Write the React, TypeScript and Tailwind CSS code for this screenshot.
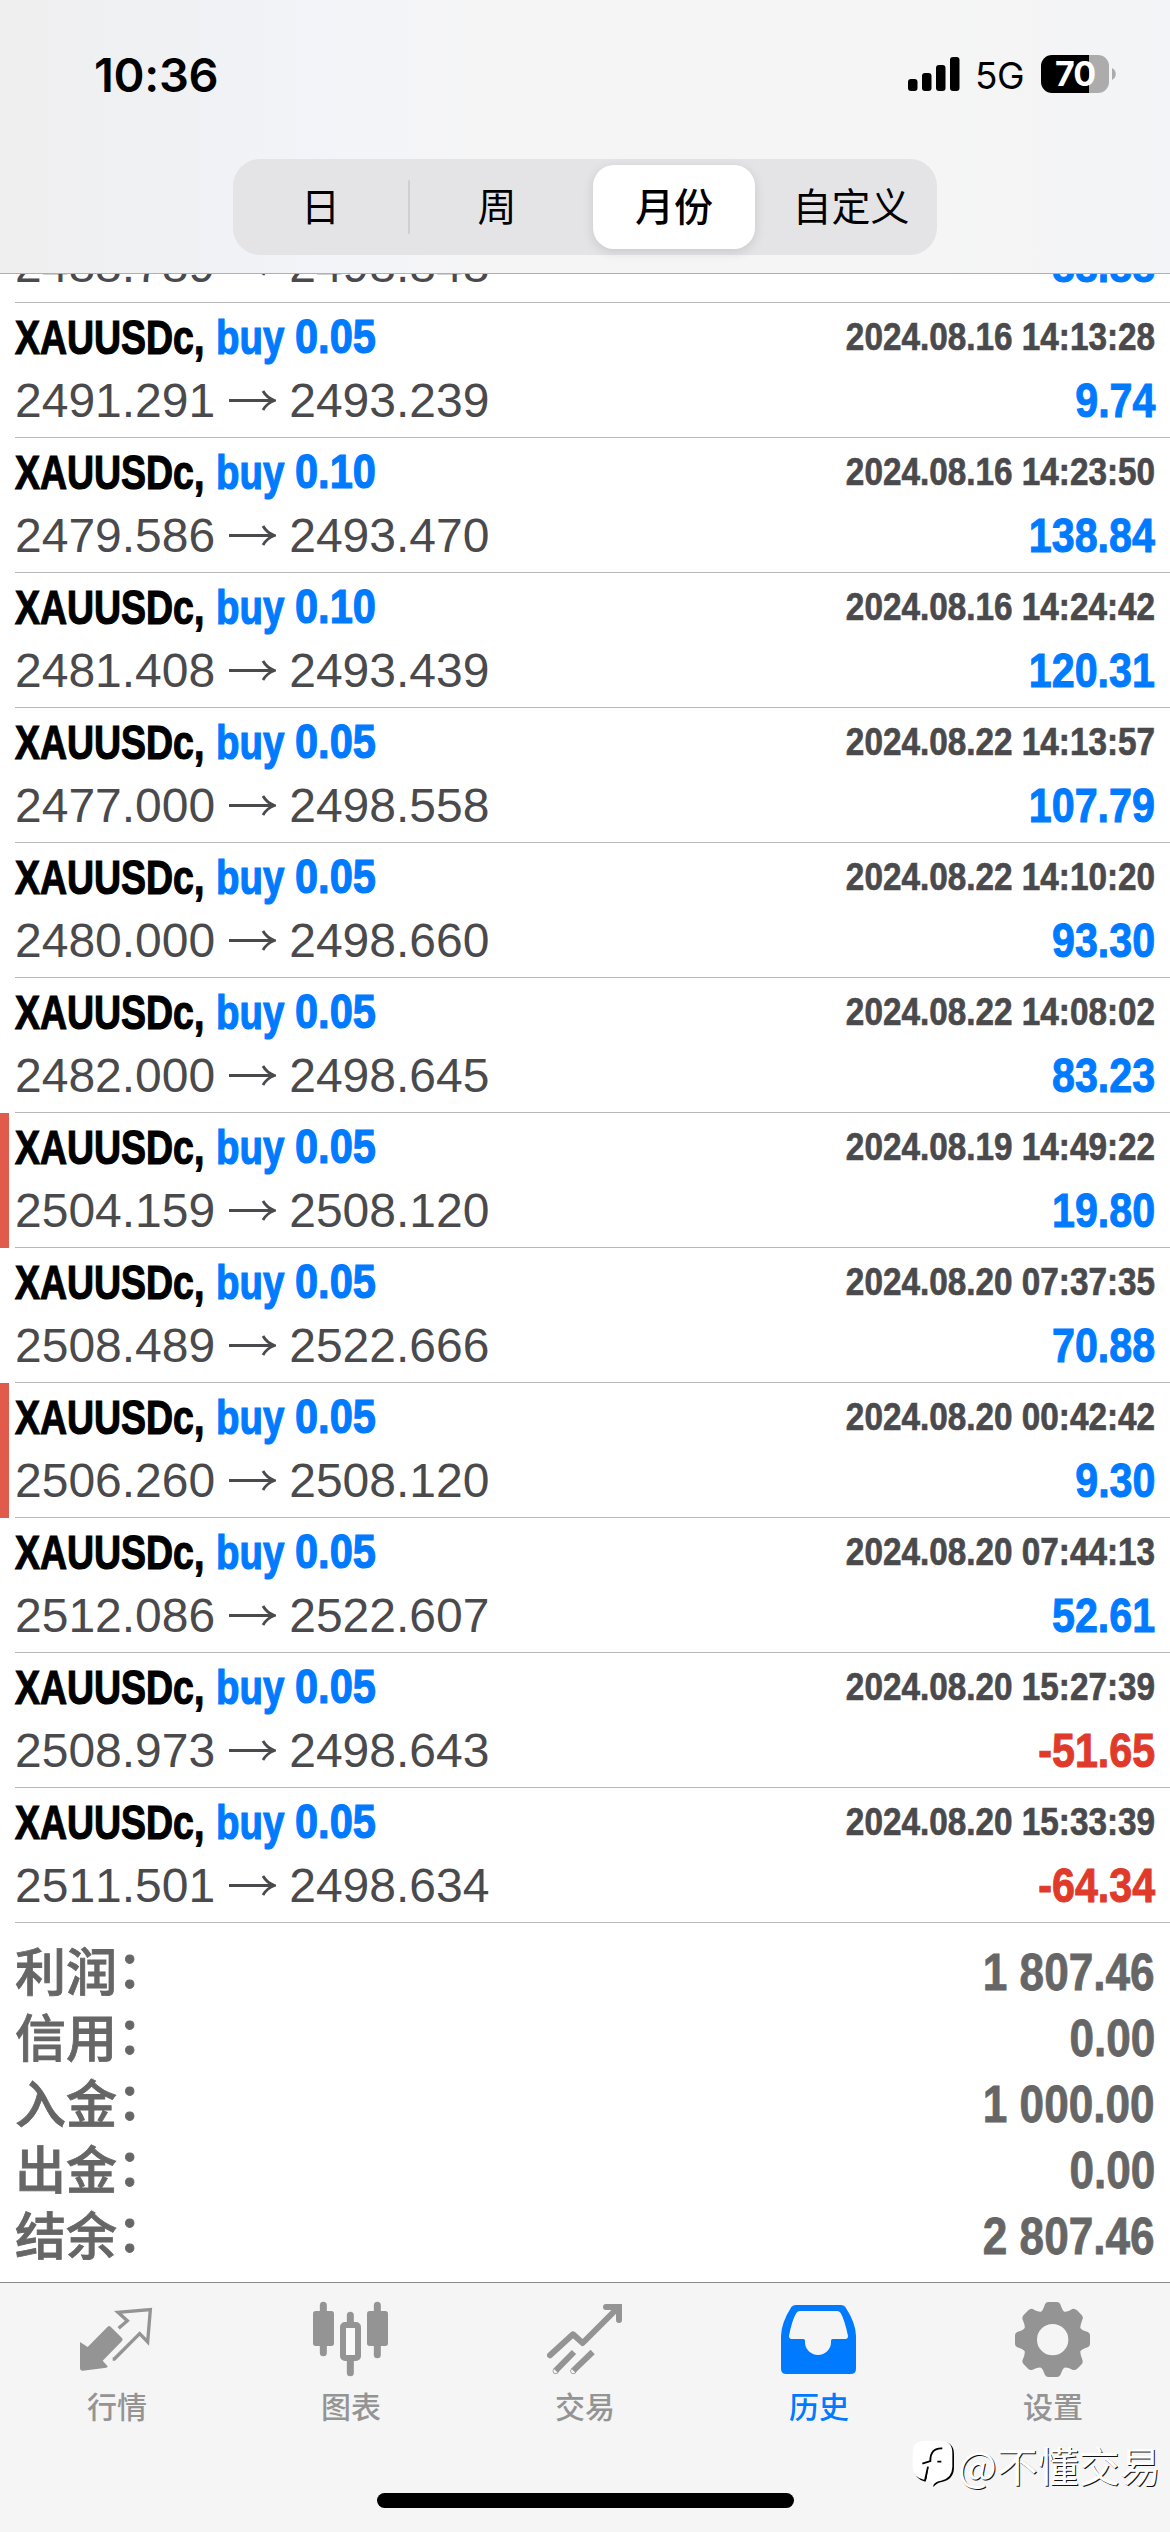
import type { ReactNode } from "react";

type Deal = {
  lots: string;
  open: string;
  close: string;
  time: string;
  profit: string;
  marked?: boolean;
};

const deals: Deal[] = [
  { lots: "0.05", open: "2491.291", close: "2493.239", time: "2024.08.16 14:13:28", profit: "9.74" },
  { lots: "0.10", open: "2479.586", close: "2493.470", time: "2024.08.16 14:23:50", profit: "138.84" },
  { lots: "0.10", open: "2481.408", close: "2493.439", time: "2024.08.16 14:24:42", profit: "120.31" },
  { lots: "0.05", open: "2477.000", close: "2498.558", time: "2024.08.22 14:13:57", profit: "107.79" },
  { lots: "0.05", open: "2480.000", close: "2498.660", time: "2024.08.22 14:10:20", profit: "93.30" },
  { lots: "0.05", open: "2482.000", close: "2498.645", time: "2024.08.22 14:08:02", profit: "83.23" },
  { lots: "0.05", open: "2504.159", close: "2508.120", time: "2024.08.19 14:49:22", profit: "19.80", marked: true },
  { lots: "0.05", open: "2508.489", close: "2522.666", time: "2024.08.20 07:37:35", profit: "70.88" },
  { lots: "0.05", open: "2506.260", close: "2508.120", time: "2024.08.20 00:42:42", profit: "9.30", marked: true },
  { lots: "0.05", open: "2512.086", close: "2522.607", time: "2024.08.20 07:44:13", profit: "52.61" },
  { lots: "0.05", open: "2508.973", close: "2498.643", time: "2024.08.20 15:27:39", profit: "-51.65" },
  { lots: "0.05", open: "2511.501", close: "2498.634", time: "2024.08.20 15:33:39", profit: "-64.34" },
];

const totals = [
  { label: "利润", value: "1 807.46" },
  { label: "信用", value: "0.00" },
  { label: "入金", value: "1 000.00" },
  { label: "出金", value: "0.00" },
  { label: "结余", value: "2 807.46" },
];

function StatusBar() {
  return (
    <div className="flex h-[159px] items-start justify-between pl-[94px] pr-[54px]">
      <span className="mt-[47px] font-['Inter'] text-[47px] font-semibold leading-[56px] tracking-[-0.3px]">
        10:36
      </span>
      <div className="mt-[55px] flex h-[38px] items-center">
        <svg className="h-[34px] w-[52px]" viewBox="0 0 52 34">
          <rect x="0" y="22" width="9.5" height="12" rx="3" />
          <rect x="14" y="16" width="9.5" height="18" rx="3" />
          <rect x="28" y="8" width="9.5" height="26" rx="3" />
          <rect x="42" y="0" width="9.5" height="34" rx="3" />
        </svg>
        <span className="ml-[15px] mt-[3px] w-[50px] font-['Inter'] text-[37px] leading-[38px] tracking-[-0.5px]">
          5G
        </span>
        <div className="ml-[16px] flex h-[38px] w-[68px] items-center justify-center rounded-[11px] bg-[linear-gradient(90deg,#000_70%,#acacac_70%)]">
          <span className="font-['Inter'] text-[34px] font-bold leading-[38px] tracking-[-1px] text-white">70</span>
        </div>
        <svg className="ml-[3px] h-[12px] w-[4px]" viewBox="0 0 4 12">
          <path d="M0 0C5 2.5 5 9.5 0 12Z" fill="#acacac" />
        </svg>
      </div>
    </div>
  );
}

function PeriodTabs() {
  return (
    <div className="mx-auto flex h-[96px] w-[704px] items-center rounded-[27px] bg-[#e4e4e7] text-[39px] leading-[56px]">
      <div className="w-[175px] text-center">日</div>
      <div className="h-[54px] w-[2px] rounded-full bg-[#cfcfd2]" />
      <div className="w-[174px] text-center">周</div>
      <div className="ml-[9px] h-[84px] w-[162px] rounded-[21px] bg-white pt-[14px] text-center font-medium shadow-[0_3px_12px_rgba(0,0,0,0.12)]">
        月份
      </div>
      <div className="ml-[10px] w-[172px] text-center">自定义</div>
    </div>
  );
}

/** Bold Helvetica squeezed to a condensed cut. */
function Condensed({ className, children }: { className: string; children: ReactNode }) {
  return (
    <span className={`inline-block whitespace-pre font-['Liberation_Sans'] font-bold [font-kerning:none] ${className}`}>
      {children}
    </span>
  );
}

function Arrow() {
  return (
    <svg className="ml-[14px] mr-[13px] h-[22px] w-[47px]" viewBox="0 0 47 22" fill="none">
      <path d="M0 10.5H45M34 1C36.5 5.5 40 8.5 45.5 10.5C40 12.5 36.5 15.5 34 20" stroke="#4a4a4d" strokeWidth="2.8" />
    </svg>
  );
}

function DealRow({ deal }: { deal: Deal }) {
  return (
    <div className="flex h-[135px] shrink-0">
      <div className={`w-[9px] ${deal.marked ? "bg-[#e05b4c]" : ""}`} />
      <div className="ml-[6px] flex flex-1 flex-col border-b border-[#b9b9bc] pr-[15px]">
        <div className="flex h-[70px] justify-between pt-[6px]">
          <div className="flex text-[48px] leading-[56px] [-webkit-text-stroke:1.2px_currentColor]">
            <div className="w-[201px]">
              <Condensed className="origin-left scale-x-[0.78] text-black">XAUUSDc,</Condensed>
            </div>
            <div className="w-[79px]">
              <Condensed className="origin-left scale-x-[0.8] text-[#007aff]">buy</Condensed>
            </div>
            <Condensed className="origin-left scale-x-[0.865] text-[#007aff]">{deal.lots}</Condensed>
          </div>
          <Condensed className="origin-right scale-x-[0.854] text-[39px] leading-[55px] text-[#4a4a4d] [-webkit-text-stroke:0.7px_currentColor]">
            {deal.time}
          </Condensed>
        </div>
        <div className="flex h-[56px] justify-between leading-[56px]">
          <div className="flex items-center font-['Liberation_Sans'] text-[48px] text-[#4a4a4d] [font-kerning:none]">
            <span>{deal.open}</span>
            <Arrow />
            <span>{deal.close}</span>
          </div>
          <Condensed
            className={`origin-right scale-x-[0.858] text-[48px] [-webkit-text-stroke:1px_currentColor] ${
              deal.profit.startsWith("-") ? "text-[#e03a2a]" : "text-[#007aff]"
            }`}
          >
            {deal.profit}
          </Condensed>
        </div>
      </div>
    </div>
  );
}

function Totals() {
  return (
    <div className="pl-[15px] pr-[15px] pt-[17px] text-[51px] text-[#666]">
      {totals.map((t) => (
        <div key={t.label} className="flex h-[66px] items-center justify-between leading-[66px]">
          <span className="font-medium [-webkit-text-stroke:0.8px_currentColor]">
            {t.label}
            <span className="inline-block -translate-y-[3px]">：</span>
          </span>
          <Condensed className="origin-right scale-x-[0.865] [-webkit-text-stroke:0.8px_currentColor]">
            {t.value}
          </Condensed>
        </div>
      ))}
    </div>
  );
}

const tabs = [
  {
    label: "行情",
    viewBox: "117 93 228 228",
    icon: (
      <>
        <path
          d="M120 216L143 231L203 170Q207 166 212 170L246 204Q250 209 246 213L188 272L203 289Q203 292 199 293L128 302Q120 302 120 294Z"
          fill="currentColor"
        />
        <path d="M236 175L262 152L234 127L331 119L323 216L299 191L223 267H218" fill="none" stroke="currentColor" strokeWidth="10" />
      </>
    ),
  },
  {
    label: "图表",
    viewBox: "819 93 228 228",
    icon: (
      <>
        <path
          d="M850 106V248M1012 106V254M931 136V165M931 265V308"
          stroke="currentColor"
          strokeWidth="21"
          strokeLinecap="round"
        />
        <rect x="819" y="123" width="63" height="105" rx="8" fill="currentColor" />
        <rect x="981" y="123" width="63" height="105" rx="8" fill="currentColor" />
        <rect x="909" y="165" width="45" height="99" rx="6" fill="#f9f9f9" stroke="currentColor" strokeWidth="18" />
      </>
    ),
  },
  {
    label: "交易",
    viewBox: "141 93 228 228",
    icon: (
      <g fill="none" stroke="currentColor" strokeWidth="18">
        <path d="M150 256L219 193L248 219L354 113" strokeLinecap="round" strokeLinejoin="round" />
        <path d="M318 111H357V150" strokeLinecap="round" />
        <path d="M222 246L167 302M278 246L220 302" />
        <circle cx="167" cy="303" r="1" strokeWidth="16" />
        <circle cx="220" cy="303" r="1" strokeWidth="16" />
      </g>
    ),
  },
  {
    label: "历史",
    viewBox: "843 93 228 228",
    active: true,
    icon: (
      <>
        <path
          d="M888 105H1023Q1031 105 1036 111Q1068 160 1068 198V296Q1068 312 1052 312H859Q843 312 843 296V198Q843 160 874 111Q879 105 888 105Z"
          fill="currentColor"
        />
        <path
          d="M900 123H1011Q1018 123 1022 129Q1034 150 1044 198Q1044 207 1036 207H998Q993 207 993 212V217A39 38 0 0 1 915 217V212Q915 207 910 207H875Q867 207 867 198Q876 150 889 129Q893 123 900 123Z"
          fill="#f5f5f5"
        />
      </>
    ),
  },
  {
    label: "设置",
    viewBox: "405 93 228 228",
    icon: (
      <path
        fillRule="evenodd"
        fill="currentColor"
        d="M505 96H531Q538 96 541 103Q548 124 553 125Q562 127 577 117Q584 115 591 121L605 135Q611 142 607 149Q600 168 601 174Q605 181 623 186Q630 189 630 196V222Q630 229 623 232Q605 238 601 244Q600 252 607 269Q610 277 605 283L591 297Q584 302 577 299Q562 291 553 293Q548 296 541 315Q538 321 531 321H505Q498 321 495 315Q488 296 483 293Q475 291 458 299Q451 302 445 297L431 283Q425 277 428 269Q436 252 434 244Q430 238 412 232Q405 229 405 222V196Q405 189 412 186Q430 181 434 174Q436 168 428 149Q425 142 431 135L445 121Q451 115 458 117Q475 127 483 125Q488 124 495 103Q498 96 505 96ZM518 162A47 47 0 1 0 518 256A47 47 0 1 0 518 162Z"
      />
    ),
  },
];

function TabBar() {
  return (
    <div className="relative h-[250px] border-t border-[#8a8a8a] bg-[#f5f5f5] pt-[18px]">
      <div className="flex">
        {tabs.map((t) => (
          <div
            key={t.label}
            className={`flex w-[234px] flex-col items-center ${t.active ? "text-[#007aff]" : "text-[#949494]"}`}
          >
            <svg className="h-[76px] w-[76px]" viewBox={t.viewBox}>
              {t.icon}
            </svg>
            <span className="mt-[9px] text-[30px] font-medium leading-[42px]">{t.label}</span>
          </div>
        ))}
      </div>
      <div className="absolute bottom-[24px] left-[377px] h-[15px] w-[417px] rounded-full bg-black" />
      {/* author tag over the bar */}
      <div className="absolute left-[912px] top-[156px] flex items-center">
        <svg className="mr-[3px] h-[50px] w-[43px]" viewBox="33 46 129 150">
          <path
            d="M75 54H122Q159 54 159 92V132Q158 168 122 175Q109 176 97 190V175L90 140L73 174Q40 166 38 132V92Q38 54 75 54Z"
            fill="#000"
          />
          <path
            d="M72 51H118Q154 51 154 88V130Q153 164 120 171Q104 172 95 186L94 172L84 130L71 169Q36 162 35 130V88Q35 51 72 51Z"
            fill="#fff"
          />
          <path d="M82 130L94 128L98 182L92 176L76 170Z" fill="#fff" />
          <path d="M124 74Q88 72 88 112L64 120M81 129L72 170M109 114H121" fill="none" stroke="#000" strokeWidth="5.5" />
        </svg>
        <span className="whitespace-nowrap font-['Noto_Sans_CJK_SC'] text-[41px] leading-[50px] text-white [text-shadow:1px_1px_0_#111]">
          @不懂交易
        </span>
      </div>
    </div>
  );
}

export default function App() {
  return (
    <div className="flex h-[2532px] w-[1170px] flex-col overflow-hidden bg-white font-['Inter','Noto_Sans_CJK_SC',sans-serif] text-black">
      <header className="h-[274px] border-b border-[#b0b0b2] bg-[linear-gradient(90deg,#efeff0_0%,#f0f1f3_15%,#f2f4f9_28%,#f5f5f6_40%,#f5f5f5_80%,#f3f4f7_100%)]">
        <StatusBar />
        <PeriodTabs />
      </header>
      {/* row half scrolled under the header */}
      <div className="flex h-[29px] flex-col justify-end overflow-hidden">
        <DealRow
          deal={{ lots: "0.05", open: "2488.789", close: "2498.848", time: "2024.08.16 14:12:36", profit: "88.88" }}
        />
      </div>
      {deals.map((d) => (
        <DealRow key={d.time} deal={d} />
      ))}
      <div className="flex-1">
        <Totals />
      </div>
      <TabBar />
    </div>
  );
}
